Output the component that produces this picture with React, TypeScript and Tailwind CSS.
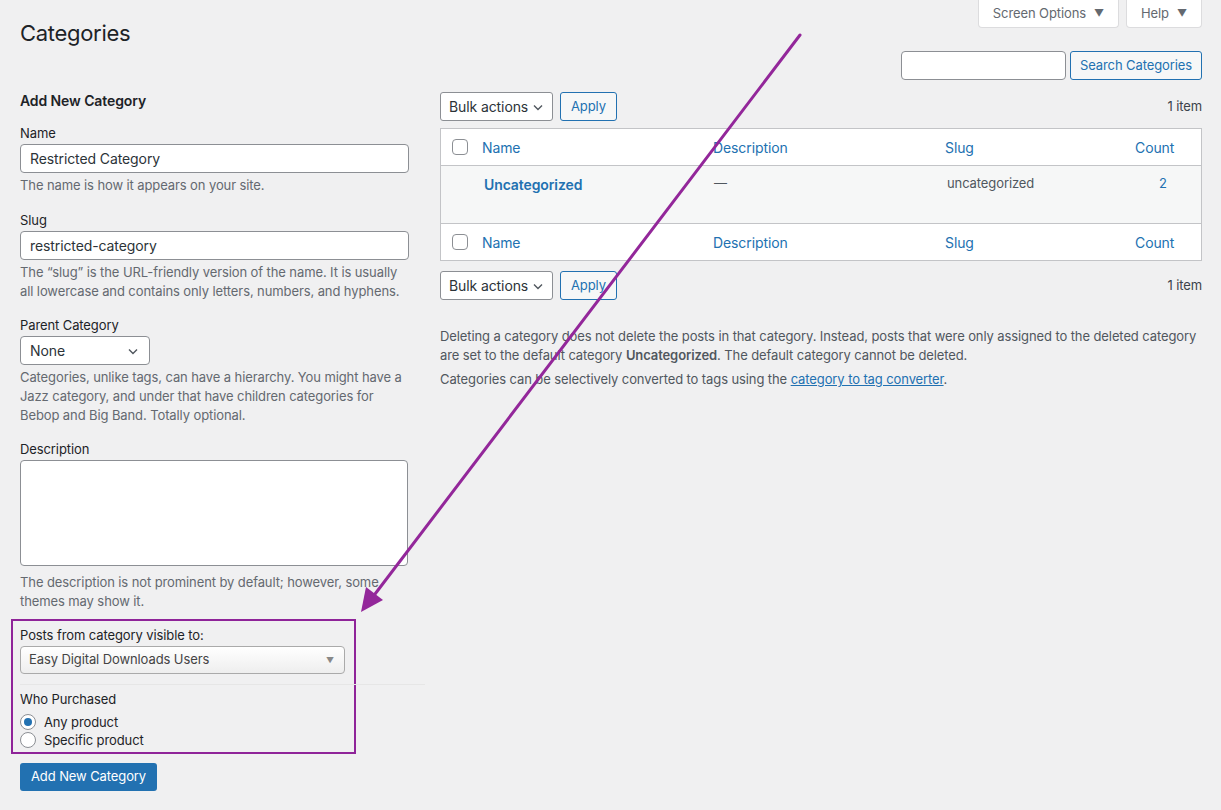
import React from 'react';

const font = { fontFamily: 'Inter, "Noto Sans", sans-serif', letterSpacing: '-0.1px' };

function Chevron() {
  return (
    <svg width="16" height="16" viewBox="0 0 16 16" className="text-[#50575e]">
      <path d="M4 6.5l4 4 4-4" fill="none" stroke="currentColor" strokeWidth="1.4" />
    </svg>
  );
}

function BulkActions() {
  return (
    <div className="flex items-center gap-[7px]">
      <div className="flex h-[29px] w-[113px] items-center justify-between rounded-[3px] border border-[#8c8f94] bg-white pl-[8px] pr-[6px] text-[14px] text-[#2c3338]">
        <span>Bulk actions</span>
        <Chevron />
      </div>
      <button className="h-[29px] rounded-[3px] border border-[#2271b1] bg-[#f6f7f7] px-[10px] text-[13px] text-[#2271b1]">
        Apply
      </button>
    </div>
  );
}

function Check() {
  return <span className="block h-[16px] w-[16px] rounded-[4px] border border-[#8c8f94] bg-white" />;
}

function HeadRow({ top }: { top?: boolean }) {
  return (
    <div
      className={`flex h-[37px] items-center text-[14px] text-[#2271b1] ${top ? 'border-b' : 'border-t'} border-[#c3c4c7]`}
    >
      <div className="flex w-[41px] pl-[11px]">
        <Check />
      </div>
      <span className="w-[231px]">Name</span>
      <span className="w-[232px]">Description</span>
      <span className="w-[190px]">Slug</span>
      <span>Count</span>
    </div>
  );
}

function Label({ children }: { children: React.ReactNode }) {
  return <div className="mb-[2px] text-[13px] leading-[18px] text-[#1d2327]">{children}</div>;
}

function Help({ children, className = 'mt-[3px]' }: { children: React.ReactNode; className?: string }) {
  return <p className={`text-[13px] leading-[19px] text-[#646970] ${className}`}>{children}</p>;
}

function TextInput({ value }: { value: string }) {
  return (
    <div className="flex h-[29px] w-full items-center rounded-[4px] border border-[#8c8f94] bg-white px-[9px] text-[14px] text-[#2c3338]">
      {value}
    </div>
  );
}

export default function App() {
  return (
    <div style={font} className="relative min-h-[810px] w-full overflow-hidden bg-[#f0f0f1] text-[13px] text-[#3c434a]">
      {/* top tabs */}
      <div className="flex justify-end gap-[7px] pr-[19px]">
        <div className="flex h-[28px] items-center gap-[8px] rounded-b-[4px] border border-t-0 border-[#dcdcde] bg-white px-[14px] text-[13px] text-[#646970]">
          Screen Options <span className="text-[10px]">▼</span>
        </div>
        <div className="flex h-[28px] items-center gap-[8px] rounded-b-[4px] border border-t-0 border-[#dcdcde] bg-white px-[14px] text-[13px] text-[#646970]">
          Help <span className="text-[10px]">▼</span>
        </div>
      </div>

      <div className="-mt-[9px] pl-[20px] pr-[19px]">
        <h1 className="text-[22px] font-normal leading-[29px] tracking-[-0.3px] text-[#1d2327]">Categories</h1>

        <div className="mt-[3px] flex justify-end gap-[4px]">
          <div className="h-[29px] w-[165px] rounded-[4px] border border-[#8c8f94] bg-white" />
          <button className="h-[29px] rounded-[3px] border border-[#2271b1] bg-[#f6f7f7] px-[9px] text-[13px] text-[#2271b1]">
            Search Categories
          </button>
        </div>

        <div className="flex">
          {/* left column */}
          <div className="w-[389px] shrink-0">
            <h2 className="mt-[11px] text-[14px] font-semibold leading-[20px] text-[#1d2327]">Add New Category</h2>

            <div className="mt-[13px]">
              <Label>Name</Label>
              <TextInput value="Restricted Category" />
              <Help>The name is how it appears on your site.</Help>
            </div>

            <div className="mt-[16px]">
              <Label>Slug</Label>
              <TextInput value="restricted-category" />
              <Help>
                The “slug” is the URL-friendly version of the name. It is usually all lowercase and contains only
                letters, numbers, and hyphens.
              </Help>
            </div>

            <div className="mt-[15px]">
              <Label>Parent Category</Label>
              <div className="flex h-[29px] w-[130px] items-center justify-between rounded-[4px] border border-[#8c8f94] bg-white pl-[9px] pr-[8px] text-[14px] text-[#2c3338]">
                <span>None</span>
                <Chevron />
              </div>
              <Help>
                Categories, unlike tags, can have a hierarchy. You might have a Jazz category, and under that have
                children categories for Bebop and Big Band. Totally optional.
              </Help>
            </div>

            <div className="mt-[15px]">
              <Label>Description</Label>
              <div className="h-[106px] w-[388px] rounded-[4px] border border-[#8c8f94] bg-white" />
              <Help className="mt-[7px]">
                The description is not prominent by default; however, some themes may show it.
              </Help>
            </div>

            {/* restriction settings */}
            <div className="relative -ml-[9px] mt-[8px] w-[345px] border-[2.5px] border-[#8f2499] pb-[3px] pl-[7px] pr-[9px] pt-[5px]">
              <div className="text-[13px] leading-[18px] text-[#1d2327]">Posts from category visible to:</div>
              <div className="mt-[2px] flex h-[28px] w-[325px] items-center justify-between rounded-[4px] border border-[#aaaaaa] bg-gradient-to-b from-white to-[#eeeeee] pl-[8px] pr-[10px] text-[13px] text-[#444]">
                <span>Easy Digital Downloads Users</span>
                <span className="text-[8px] text-[#888]">▼</span>
              </div>
              <div className="-mr-[80px] mt-[10px] h-px bg-[#e6e6e6]" />
              <div className="mt-[5px] text-[13px] leading-[18px] text-[#1d2327]">Who Purchased</div>
              <div className="mt-[5px] flex items-center gap-[8px] leading-[18px] text-[#1d2327]">
                <span className="flex h-[16px] w-[16px] items-center justify-center rounded-full border border-[#8c8f94] bg-white">
                  <span className="h-[8px] w-[8px] rounded-full bg-[#2271b1]" />
                </span>
                Any product
              </div>
              <div className="flex items-center gap-[8px] leading-[18px] text-[#1d2327]">
                <span className="h-[16px] w-[16px] rounded-full border border-[#8c8f94] bg-white" />
                Specific product
              </div>
            </div>

            <button className="mt-[9px] h-[28px] rounded-[3px] bg-[#2271b1] px-[11px] text-[13px] text-white">
              Add New Category
            </button>
          </div>

          {/* right column */}
          <div className="ml-[31px] flex-1">
            <div className="mt-[12px] flex items-center justify-between">
              <BulkActions />
              <span className="text-[13px] text-[#3c434a]">1 item</span>
            </div>

            <div className="mt-[7px] border border-[#c3c4c7] bg-white">
              <HeadRow top />
              <div className="flex h-[57px] items-start bg-[#f6f7f7] pt-[8px] text-[13px]">
                <div className="w-[43px]" />
                <span className="w-[230px] text-[14px] font-semibold text-[#2271b1]">Uncategorized</span>
                <span className="w-[233px] text-[#50575e]">—</span>
                <span className="w-[212px] text-[#50575e]">uncategorized</span>
                <span className="text-[#2271b1]">2</span>
              </div>
              <HeadRow />
            </div>

            <div className="mt-[10px] flex items-center justify-between">
              <BulkActions />
              <span className="text-[13px] text-[#3c434a]">1 item</span>
            </div>

            <p className="mt-[27px] text-[13px] leading-[19px] text-[#50575e]">
              Deleting a category does not delete the posts in that category. Instead, posts that were only assigned
              to the deleted category are set to the default category <b className="font-semibold">Uncategorized</b>.
              The default category cannot be deleted.
            </p>
            <p className="mt-[5px] text-[13px] leading-[19px] text-[#50575e]">
              Categories can be selectively converted to tags using the{' '}
              <span className="text-[#2271b1] underline">category to tag converter</span>.
            </p>
          </div>
        </div>
      </div>

      {/* annotation arrow */}
      <svg className="pointer-events-none absolute left-0 top-0" width="1221" height="810">
        <line x1="800" y1="35" x2="372" y2="598" stroke="#93279a" strokeWidth="3" strokeLinecap="round" />
        <polygon points="361,612 366,587 383,600" fill="#93279a" />
      </svg>
    </div>
  );
}
